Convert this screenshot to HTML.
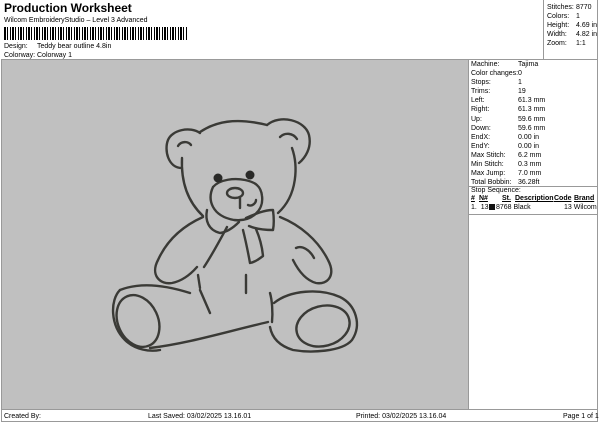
<!DOCTYPE html>
<html><head><meta charset="utf-8"><style>
*{margin:0;padding:0;box-sizing:border-box}
body{width:600px;height:424px;background:#fff;font-family:"Liberation Sans",sans-serif;color:#000;position:relative;overflow:hidden;font-size:7px}
.a{position:absolute;white-space:nowrap}
.b{position:absolute;background:#999}
</style></head><body>
<div class="a" style="left:4px;top:1px;font-size:12px;font-weight:bold">Production Worksheet</div>
<div class="a" style="left:4px;top:17px">Wilcom EmbroideryStudio – Level 3 Advanced</div>
<div class="a" style="left:4px;top:27px;width:183px;height:13px;background:repeating-linear-gradient(90deg,#000 0 2px,#fff 2px 3px,#000 3px 4px,#fff 4px 6px,#000 6px 7px,#fff 7px 8px)"></div>
<div class="a" style="left:4px;top:43px">Design:</div><div class="a" style="left:37px;top:43px">Teddy bear outline 4.8in</div>
<div class="a" style="left:4px;top:52px">Colorway:</div><div class="a" style="left:37px;top:52px">Colorway 1</div>

<div class="b" style="left:543px;top:0;width:1px;height:60px"></div>
<div class="b" style="left:597px;top:0;width:1px;height:422px"></div>
<div class="b" style="left:1px;top:60px;width:1px;height:362px"></div>
<div class="b" style="left:1px;top:59px;width:597px;height:1px"></div>
<div class="a" style="left:2px;top:60px;width:466px;height:349px;background:#c0c0c0"></div>
<div class="b" style="left:468px;top:60px;width:1px;height:349px"></div>
<div class="b" style="left:1px;top:409px;width:597px;height:1px"></div>
<div class="b" style="left:1px;top:421px;width:597px;height:1px"></div>

<div class="a" style="left:547px;top:3px;line-height:9px">Stitches:<br>Colors:<br>Height:<br>Width:<br>Zoom:</div>
<div class="a" style="left:576px;top:3px;line-height:9px">8770<br>1<br>4.69 in<br>4.82 in<br>1:1</div>

<div class="a" style="left:471px;top:60px;line-height:9.1px">Machine:<br>Color changes:<br>Stops:<br>Trims:<br>Left:<br>Right:<br>Up:<br>Down:<br>EndX:<br>EndY:<br>Max Stitch:<br>Min Stitch:<br>Max Jump:<br>Total Bobbin:</div>
<div class="a" style="left:518px;top:60px;line-height:9.1px">Tajima<br>0<br>1<br>19<br>61.3 mm<br>61.3 mm<br>59.6 mm<br>59.6 mm<br>0.00 in<br>0.00 in<br>6.2 mm<br>0.3 mm<br>7.0 mm<br>36.28ft</div>
<div class="b" style="left:469px;top:186px;width:128px;height:1px"></div>
<div class="a" style="left:471px;top:187px">Stop Sequence:</div>
<div class="a" style="left:471px;top:195px;font-weight:bold;text-decoration:underline">#</div>
<div class="a" style="left:479px;top:195px;font-weight:bold;text-decoration:underline">N#</div>
<div class="a" style="left:502px;top:195px;font-weight:bold;text-decoration:underline">St.</div>
<div class="a" style="left:515px;top:195px;font-weight:bold;text-decoration:underline">Description</div>
<div class="a" style="left:554px;top:195px;font-weight:bold;text-decoration:underline">Code</div>
<div class="a" style="left:574px;top:195px;font-weight:bold;text-decoration:underline">Brand</div>
<div class="a" style="left:471px;top:204px">1.&nbsp; 13</div>
<div class="a" style="left:489px;top:204px;width:6px;height:6px;background:#111"></div>
<div class="a" style="left:496px;top:204px">8768 Black</div>
<div class="a" style="left:564px;top:204px">13 Wilcom</div>
<div class="b" style="left:469px;top:214px;width:128px;height:1px"></div>

<div class="a" style="left:4px;top:413px">Created By:</div>
<div class="a" style="left:148px;top:413px">Last Saved: 03/02/2025 13.16.01</div>
<div class="a" style="left:356px;top:413px">Printed: 03/02/2025 13.16.04</div>
<div class="a" style="left:563px;top:413px">Page 1 of 1</div>

<svg class="a" style="left:0;top:0" width="600" height="424" viewBox="0 0 600 424">
<g fill="none" stroke="#3a3a36" stroke-width="2.4" stroke-linecap="round" stroke-linejoin="round">
<path d="M182 168 C168 168 164 150 168 140 C172 130 190 126 200 133"/>
<path d="M178 146 C181 141 188 141 191 145"/>
<path d="M200 132 C215 122 235 117 267 125"/>
<path d="M267 125 C280 114 305 120 309 135 C312 148 305 158 299 163"/>
<path d="M280 137 C285 132 293 133 297 139"/>
<path d="M292 148 C298 165 298 195 278 213"/>
<path d="M182 158 C181 180 186 200 203 216"/>
<path d="M213 187 C207 200 212 216 234 220 C252 222 264 210 262 196 C261 186 255 182 245 180 C235 178 220 179 213 187"/>
<ellipse cx="235" cy="193" rx="8" ry="5"/>
<path d="M240 198 L240 208"/>
<path d="M248 205 C252 207 256 203 256 200"/>
<path d="M207 210 C205 220 208 230 220 233 C228 232 234 227 239 222"/>
<path d="M246 218 C255 214 264 210 273 210 C274 218 274 225 273 230 C265 230 256 229 249 226"/>
<path d="M227 227 C220 240 212 255 204 267"/>
<path d="M243 230 C246 242 248 252 250 263 C255 262 259 259 263 256 C262 245 259 236 256 229"/>
<path d="M203 217 C185 225 168 238 158 260 C150 275 160 285 172 283 C182 281 190 275 197 267"/>
<path d="M280 217 C300 225 318 240 328 260 C336 275 328 285 316 283 C305 280 298 270 293 260"/>
<path d="M296 248 C302 245 310 250 314 258"/>
<path d="M198 275 L200 288"/>
<path d="M200 290 L210 313"/>
<path d="M246 275 L246 293"/>
<path d="M120 290 C110 300 110 325 125 340 C135 350 150 352 160 350"/>
<path d="M120 290 C140 282 165 285 190 293"/>
<ellipse cx="138" cy="321" rx="20" ry="27" transform="rotate(-25 138 321)"/>
<path d="M150 348 C190 343 225 332 268 322"/>
<path d="M274 303 C290 290 320 288 340 297 C356 305 362 325 352 340 C342 352 310 353 293 350 C280 346 272 338 270 327"/>
<ellipse cx="323" cy="326" rx="27" ry="20" transform="rotate(-15 323 326)"/>
<path d="M270 293 C272 300 273 312 272 322"/>
</g>
<circle cx="218" cy="178" r="4.5" fill="#2a2a28"/>
<circle cx="250" cy="175" r="4.5" fill="#2a2a28"/>
</svg>
</body></html>
